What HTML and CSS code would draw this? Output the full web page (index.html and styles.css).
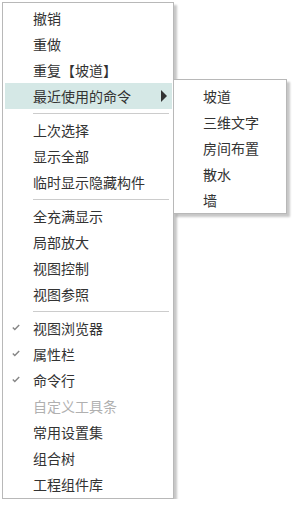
FILE: index.html
```html
<!DOCTYPE html>
<html lang="zh">
<head>
<meta charset="utf-8">
<link rel="stylesheet" href="styles.css">
</head>
<body>
<div class="menu">
  <div class="item">撤销</div>
  <div class="item">重做</div>
  <div class="item">重复【坡道】</div>
  <div class="item active has-sub">最近使用的命令
    <span class="arrow"></span>
    <div class="menu submenu">
      <div class="item">坡道</div>
      <div class="item">三维文字</div>
      <div class="item">房间布置</div>
      <div class="item">散水</div>
      <div class="item">墙</div>
    </div>
  </div>
  <div class="sep"></div>
  <div class="item">上次选择</div>
  <div class="item">显示全部</div>
  <div class="item">临时显示隐藏构件</div>
  <div class="sep"></div>
  <div class="item">全充满显示</div>
  <div class="item">局部放大</div>
  <div class="item">视图控制</div>
  <div class="item">视图参照</div>
  <div class="sep"></div>
  <div class="item checked"><svg class="check" width="8" height="7" viewBox="0 0 8 7"><polyline points="0.8,3.6 2.8,5.6 7.2,1" fill="none" stroke="#858585" stroke-width="1.4"/></svg>视图浏览器</div>
  <div class="item checked"><svg class="check" width="8" height="7" viewBox="0 0 8 7"><polyline points="0.8,3.6 2.8,5.6 7.2,1" fill="none" stroke="#858585" stroke-width="1.4"/></svg>属性栏</div>
  <div class="item checked"><svg class="check" width="8" height="7" viewBox="0 0 8 7"><polyline points="0.8,3.6 2.8,5.6 7.2,1" fill="none" stroke="#858585" stroke-width="1.4"/></svg>命令行</div>
  <div class="item disabled">自定义工具条</div>
  <div class="item">常用设置集</div>
  <div class="item">组合树</div>
  <div class="item">工程组件库</div>
</div>
</body>
</html>
```
FILE: styles.css
```css
html, body {
  margin: 0;
  padding: 0;
  background: #ffffff;
}
body {
  padding: 2px 0 0 2px;
  font-family: "Noto Sans CJK SC", "Noto Sans", sans-serif;
  font-size: 14px;
  color: #333333;
}
.menu {
  width: 167px;
  border: 1px solid #b8b8b8;
  background: #ffffff;
  padding: 2px 1px 1px 2px;
  box-shadow: 3px 3px 2px rgba(0, 0, 0, 0.22);
  box-sizing: content-box;
}
.menu > .item {
  position: relative;
  height: 26px;
  line-height: 26px;
  padding-left: 28px;
  white-space: nowrap;
}
.item.active {
  background: #d5e8e6;
}
.item.disabled {
  color: #b0b0b0;
}
.check {
  position: absolute;
  left: 7px;
  top: 9px;
}
.arrow {
  position: absolute;
  left: 156px;
  top: 7px;
  width: 0;
  height: 0;
  border-top: 6px solid transparent;
  border-bottom: 6px solid transparent;
  border-left: 6px solid #333333;
}
.sep {
  height: 8px;
  display: flex;
  align-items: flex-start;
  padding-top: 4px;
  box-sizing: border-box;
  margin-left: 28px;
  margin-right: 3px;
}
.sep::before {
  content: "";
  display: block;
  width: 100%;
  height: 1px;
  background: #cccccc;
}
.submenu {
  position: absolute;
  left: 168px;
  top: -4px;
  width: 112px;
  padding: 3px 0 0 0;
  line-height: 26px;
}
.submenu > .item {
  height: 26px;
  padding-left: 29px;
}
```
